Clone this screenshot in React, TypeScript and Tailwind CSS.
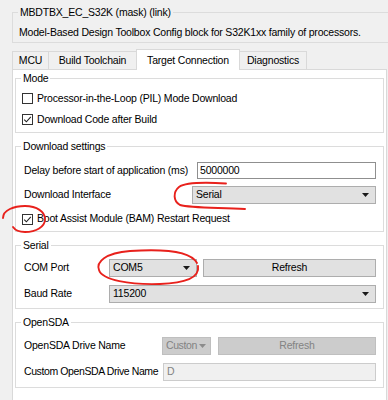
import React from 'react'

const Arrow = ({ disabled }: { disabled?: boolean }) => (
  <svg width="7" height="4" viewBox="0 0 7 4">
    <path d="M0 0h7L3.5 4z" fill={disabled ? '#8c8c8c' : '#1a1a1a'} />
  </svg>
)

const Check = ({ checked }: { checked?: boolean }) => (
  <span className="w-[11px] h-[11px] border border-[#333] bg-white flex items-center justify-center shrink-0">
    {checked && (
      <svg width="9" height="9" viewBox="0 0 9 9">
        <path d="M1.2 4.6l2.2 2.2L7.8 1.8" stroke="#222" strokeWidth="1.1" fill="none" />
      </svg>
    )}
  </span>
)

const Group = ({ title, className, children }: { title: string; className: string; children: React.ReactNode }) => (
  <fieldset className={`border border-[#dcdcdc] ${className}`}>
    <legend className="ml-[5px] px-[2px] leading-[14px]">{title}</legend>
    {children}
  </fieldset>
)

const Combo = ({ value, className }: { value: string; className: string }) => (
  <div className={`h-[18px] bg-[#e1e1e1] border border-[#adadad] flex items-center justify-between pl-[3px] pr-[6px] ${className}`}>
    <span>{value}</span>
    <Arrow />
  </div>
)

export default function App() {
  return (
    <div className="relative w-[388px] h-[400px] overflow-hidden bg-[#f0f0f0] pt-[5px] pl-[12px] text-[10.5px] tracking-[-0.2px] text-black font-['Liberation_Sans',Arial,sans-serif]">
      <fieldset className="w-[390px] border border-[#dcdcdc] pb-[2px]">
        <legend className="ml-[5px] px-[2px] leading-[14px]">MBDTBX_EC_S32K (mask) (link)</legend>
        <div className="mt-[5px] h-[16px] leading-[16px] pl-[6px]">
          Model-Based Design Toolbox Config block for S32K1xx family of processors.
        </div>
      </fieldset>

      {/* tabs */}
      <div className="mt-[6px] h-[20px] flex items-end">
        <div className="w-[37px] h-[18px] border border-b-0 border-[#d9d9d9] flex items-center justify-center">MCU</div>
        <div className="-ml-px w-[89px] h-[18px] border border-b-0 border-[#d9d9d9] flex items-center justify-center">Build Toolchain</div>
        <div className="relative z-10 -ml-px -mb-px w-[104px] h-[21px] bg-white border border-b-0 border-[#d9d9d9] flex items-center justify-center pt-[2px]">Target Connection</div>
        <div className="-ml-px w-[68px] h-[18px] border border-b-0 border-[#d9d9d9] flex items-center justify-center">Diagnostics</div>
      </div>

      <div className="w-[375px] h-[400px] bg-white border border-[#d9d9d9] px-[2px] pt-[1px]">
        <Group title="Mode" className="pt-[3px] pb-[2px]">
          <div className="h-[21px] flex items-center gap-[4px] pl-[6px]">
            <Check />
            <span>Processor-in-the-Loop (PIL) Mode Download</span>
          </div>
          <div className="h-[21px] flex items-center gap-[4px] pl-[6px]">
            <Check checked />
            <span>Download Code after Build</span>
          </div>
        </Group>

        <Group title="Download settings" className="mt-[6px] pt-[5px]">
          <div className="h-[25px] grid grid-cols-[181px_1fr] items-center pr-[7px]">
            <span className="pl-[8px]">Delay before start of application (ms)</span>
            <div className="h-[17px] bg-white border border-[#8f8f8f] flex items-center pl-[2px]">5000000</div>
          </div>
          <div className="h-[24px] grid grid-cols-[176px_1fr] items-center pr-[7px]">
            <span className="pl-[8px]">Download Interface</span>
            <Combo value="Serial" className="h-[17px]" />
          </div>
          <div className="h-[24px] flex items-center gap-[4px] pl-[6px]">
            <Check checked />
            <span>Boot Assist Module (BAM) Restart Request</span>
          </div>
        </Group>

        <Group title="Serial" className="mt-[6px] pt-[3px] pb-[1px]">
          <div className="h-[26px] grid grid-cols-[93px_1fr] items-center pr-[7px]">
            <span className="pl-[8px]">COM Port</span>
            <div className="flex gap-[6px]">
              <Combo value="COM5" className="w-[88px]" />
              <div className="flex-1 h-[18px] bg-[#e1e1e1] border border-[#adadad] flex items-center justify-center">Refresh</div>
            </div>
          </div>
          <div className="h-[26px] grid grid-cols-[93px_1fr] items-center pr-[7px]">
            <span className="pl-[8px]">Baud Rate</span>
            <Combo value="115200" className="" />
          </div>
        </Group>

        <Group title="OpenSDA" className="mt-[6px] pt-[4px] pb-[2px]">
          <div className="h-[26px] grid grid-cols-[146px_1fr] items-center pr-[7px]">
            <span className="pl-[8px]">OpenSDA Drive Name</span>
            <div className="flex gap-[7px]">
              <div className="w-[49px] h-[18px] bg-[#cccccc] border border-[#bfbfbf] flex items-center justify-between pl-[3px] pr-[4px] text-[#838383]">
                <span className="tracking-[-0.4px]">Custon</span>
                <Arrow disabled />
              </div>
              <div className="flex-1 h-[18px] bg-[#cccccc] border border-[#bfbfbf] flex items-center justify-center text-[#838383]">Refresh</div>
            </div>
          </div>
          <div className="h-[26px] grid grid-cols-[147px_1fr] items-center pr-[7px]">
            <span className="pl-[8px] whitespace-nowrap tracking-[-0.4px]">Custom OpenSDA Drive Name</span>
            <div className="h-[18px] bg-[#f0f0f0] border border-[#cccccc] flex items-center pl-[3px] text-[#838383]">D</div>
          </div>
        </Group>
      </div>

      {/* red hand-drawn annotations */}
      <svg className="absolute left-0 top-0 z-20 pointer-events-none" width="388" height="400" viewBox="0 0 388 400" fill="none" stroke="#e8211c" strokeWidth="1.9" strokeLinecap="round" strokeLinejoin="round">
        <path d="M226 183.5 C210 182.5 186 182 179 187 C173 192 173 201 180 205 C190 208 215 207.5 245 209" />
        <path d="M3 218 C3 210 14 206 25 206 C37 206 45 212 45 219 C45 227 36 232 25 232 C19 232 15 230 13 227" />
        <path d="M197 263 C190 250 160 249 130 251 C105 253 96 262 99 270 C102 280 130 285 160 284 C185 283 200 278 198 266" />
      </svg>
    </div>
  )
}
